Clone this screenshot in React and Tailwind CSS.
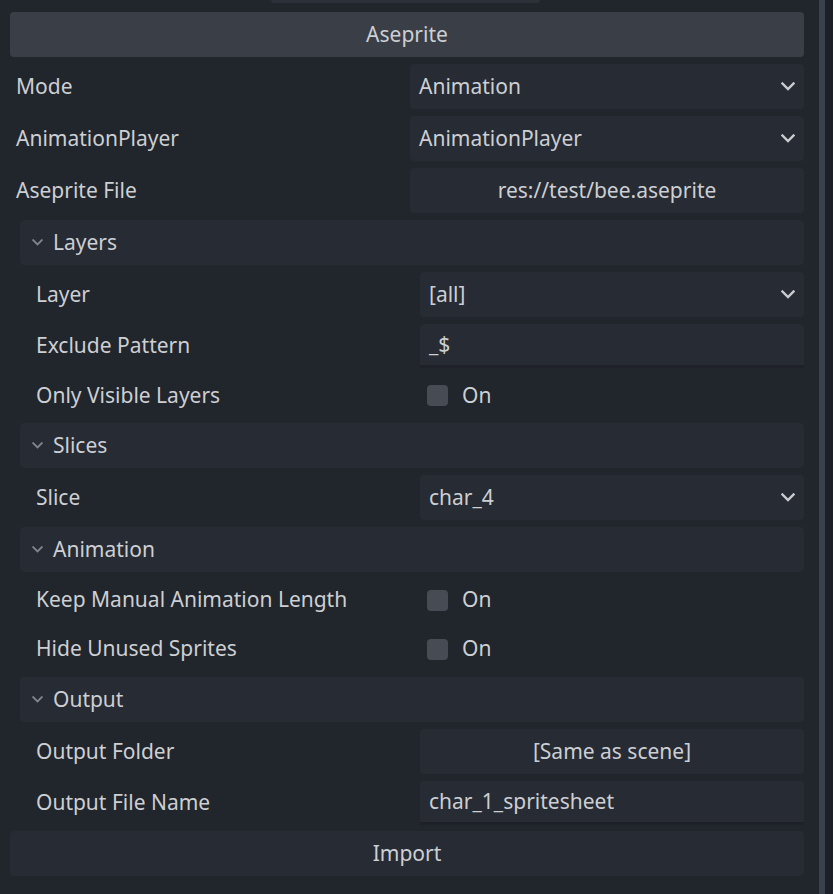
import { useState } from "react";

// little chevron used by the option buttons and the section headers
function Chevron({ className }) {
  return (
    <svg viewBox="0 0 14 9" className={className} fill="none">
      <path d="M1.5 1.5 L7 7 L12.5 1.5" stroke="currentColor" strokeWidth="2.4" strokeLinecap="square" />
    </svg>
  );
}

function OptionField({ value }) {
  return (
    <div className="flex h-[45px] flex-1 items-center justify-between rounded-[4px] bg-[#262b34] pl-[9px] pr-[9px]">
      <span>{value}</span>
      <Chevron className="h-[9px] w-[14px] text-[#c9cbcf]" />
    </div>
  );
}

function ButtonField({ value }) {
  return (
    <div className="flex h-[45px] flex-1 items-center justify-center rounded-[4px] bg-[#262b34]">
      {value}
    </div>
  );
}

function LineField({ value }) {
  return (
    <div className="flex flex-1 flex-col">
      <div className="flex h-[41px] items-center rounded-t-[4px] bg-[#262b34] pl-[9px]">{value}</div>
      <div className="h-[3px] bg-[#1e2228]" />
    </div>
  );
}

function CheckField({ checked, onToggle, tall }) {
  return (
    <div className={"flex flex-1 items-center pl-[7px] " + (tall ? "h-[42px]" : "h-[41px]")} onClick={onToggle}>
      <div className={"h-[21px] w-[21px] rounded-[4px] " + (checked ? "bg-[#6fa8f0]" : "bg-[#474b53]")} />
      <span className="ml-[14px]">On</span>
    </div>
  );
}

function Row({ label, nested, children }) {
  return (
    <div className="flex items-center">
      <div className={nested ? "w-[410px] pl-[26px]" : "w-[400px] pl-[6px]"}>{label}</div>
      {children}
    </div>
  );
}

function Section({ title }) {
  return (
    <div className="ml-[10px] flex h-[45px] items-center rounded-[4px] bg-[#262b34] pl-[12px]">
      <Chevron className="h-[7px] w-[11px] text-[#80848c]" />
      <span className="ml-[10px]">{title}</span>
    </div>
  );
}

export default function App() {
  const [checks, setChecks] = useState({ visible: false, keep: false, hide: false });
  const toggle = (k) => setChecks((c) => ({ ...c, [k]: !c[k] }));

  return (
    <div
      className="flex h-[894px] w-[833px] overflow-hidden bg-[#21252c] text-[21px] text-[#cdcfd3]"
      style={{ fontFamily: '"Noto Sans", "Open Sans", sans-serif' }}
    >
      <div className="w-[819px] pl-[10px] pr-[15px]">
        <div className="ml-[261px] h-[3px] w-[269px] rounded-b-[3px] bg-[#2b3039]" />
        <div className="mt-[9px] flex flex-col gap-[7px]">
          <div className="flex h-[45px] items-center justify-center rounded-[4px] bg-[#3a3e46]">Aseprite</div>

          <Row label="Mode"><OptionField value="Animation" /></Row>
          <Row label="AnimationPlayer"><OptionField value="AnimationPlayer" /></Row>
          <Row label="Aseprite File"><ButtonField value="res://test/bee.aseprite" /></Row>

          <Section title="Layers" />
          <Row nested label="Layer"><OptionField value="[all]" /></Row>
          <Row nested label="Exclude Pattern"><LineField value="_$" /></Row>
          <Row nested label="Only Visible Layers">
            <CheckField checked={checks.visible} onToggle={() => toggle("visible")} />
          </Row>

          <Section title="Slices" />
          <Row nested label="Slice"><OptionField value="char_4" /></Row>

          <Section title="Animation" />
          <Row nested label="Keep Manual Animation Length">
            <CheckField tall checked={checks.keep} onToggle={() => toggle("keep")} />
          </Row>
          <Row nested label="Hide Unused Sprites">
            <CheckField tall checked={checks.hide} onToggle={() => toggle("hide")} />
          </Row>

          <Section title="Output" />
          <Row nested label="Output Folder"><ButtonField value="[Same as scene]" /></Row>
          <Row nested label="Output File Name"><LineField value="char_1_spritesheet" /></Row>

          <div className="mt-[-1px] flex h-[45px] items-center justify-center rounded-[4px] bg-[#262b34]">Import</div>
        </div>
      </div>
      {/* scrollbar */}
      <div className="w-[6px] bg-[#3b414e]" />
      <div className="flex-1 bg-[#1c2026]" />
    </div>
  );
}
